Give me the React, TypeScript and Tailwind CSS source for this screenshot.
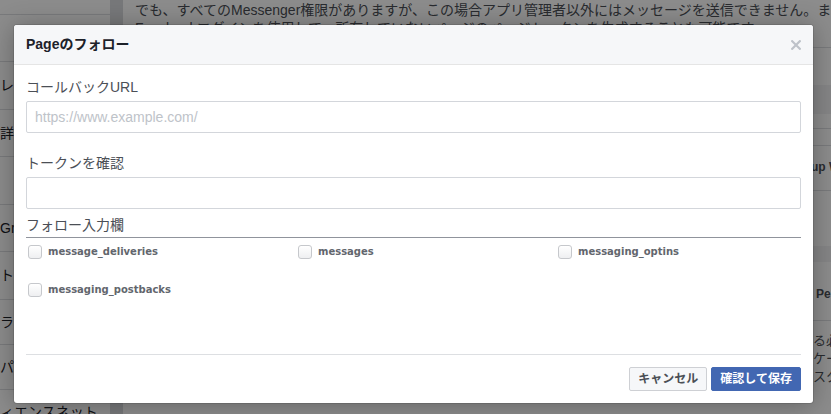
import React from "react";

const sans = "font-['Liberation_Sans','Noto_Sans_CJK_JP',sans-serif]";

function Checkbox({ label }: { label: string }) {
  return (
    <div className="flex h-[16px] items-center">
      <span className="block h-[14px] w-[14px] rounded-[3px] border border-[#c6c8cc] bg-gradient-to-b from-white to-[#eeeff1]" />
      <span className="ml-[6px] font-['DejaVu_Sans',sans-serif] text-[10px] font-bold leading-[16px] text-[#62666d]">
        {label}
      </span>
    </div>
  );
}

export default function App() {
  const sideItems: { h: string; text: string }[] = [
    { h: "h-[15px]", text: "" },
    { h: "h-[47px]", text: "" },
    { h: "h-[48px]", text: "レス" },
    { h: "h-[47px]", text: "詳細" },
    { h: "h-[48px]", text: "" },
    { h: "h-[47px]", text: "Graph" },
    { h: "h-[48px]", text: "トー" },
    { h: "h-[45px]", text: "ラベ" },
    { h: "h-[45px]", text: "パー" },
  ];

  return (
    <div className={`relative h-[414px] w-[831px] overflow-hidden bg-white ${sans}`}>
      {/* background page */}
      <div className="flex h-full">
        <aside className="flex w-[110px] flex-col overflow-hidden bg-white">
          {sideItems.map((it, i) => (
            <div
              key={i}
              className={`${it.h} flex shrink-0 items-center whitespace-nowrap border-b border-[#dddfe2] text-[14px] text-[#1d2129]`}
            >
              {it.text}
            </div>
          ))}
          <div className="whitespace-nowrap pt-[13px] text-[14px] leading-[18px] text-[#1d2129]">
            ィエンスネット
          </div>
        </aside>
        <div className="w-[13px] bg-[#d9dbdf]" />
        <main className="flex min-w-0 flex-1 flex-col bg-white pl-[12px]">
          <p className="mt-[1px] whitespace-nowrap text-[14px] leading-[18px] text-[#4b4f56]">
            でも、すべてのMessenger権限がありますが、この場合アプリ管理者以外にはメッセージを送信できません。ま
            <br />
            Facebookログインを使用して、所有していないページのページトークンを生成することも可能です。
          </p>
          <div className="flex flex-1">
            <div className="flex-1" />
            <div className="flex w-[18px] flex-col overflow-hidden whitespace-nowrap">
              <div className="h-[11px] shrink-0 border-b border-[#dddfe2]" />
              <div className="h-[37px] shrink-0" />
              <div className="h-[29px] shrink-0 bg-[#f2f3f5]" />
              <div className="h-[15px] shrink-0 border-b border-[#dddfe2]" />
              <div className="h-[17px] shrink-0 border-b border-[#dddfe2]" />
              <div className="mt-[8px] flex h-[25px] shrink-0 items-center pl-[2px] text-[12px] font-bold text-[#4b4f56]">
                <span className="-ml-[4px]">up W</span>
              </div>
              <div className="h-[12px] shrink-0 border-b border-[#dddfe2]" />
              <div className="mt-[55px] h-[16px] shrink-0 bg-[#f2f3f5]" />
              <div className="mt-[22px] flex h-[20px] shrink-0 items-center pl-[3px] text-[12px] font-bold text-[#4b4f56]">
                Pe
              </div>
              <div className="h-[17px] shrink-0 border-b border-[#dddfe2]" />
              <div className="mt-[11px] text-[13px] leading-[18px] text-[#4b4f56]">
                る必
                <br />
                ケー
                <br />
                スタ
              </div>
            </div>
          </div>
        </main>
      </div>

      {/* dim overlay */}
      <div className="absolute inset-0 bg-black/[0.45]" />

      {/* modal */}
      <div className="absolute left-[14px] top-[25px] flex h-[378px] w-[799px] flex-col rounded-[3px] bg-white shadow-[0_2px_26px_rgba(0,0,0,0.3),0_0_0_1px_rgba(0,0,0,0.1)]">
        <div className="flex h-[40px] shrink-0 items-center justify-between rounded-t-[3px] border-b border-[#e5e5e5] bg-[#f6f7f9] px-[12px]">
          <h2 className="-mt-[1px] text-[14px] font-bold leading-[18px] text-[#1d2129]">Pageのフォロー</h2>
          <svg width="10" height="10" viewBox="0 0 10 10">
            <path d="M1.2 1.2 L8.8 8.8 M8.8 1.2 L1.2 8.8" stroke="#bec2c9" strokeWidth="2.2" strokeLinecap="square" />
          </svg>
        </div>

        <div className="flex-1 px-[12px] pt-[12px]">
          <label className="mb-[4px] block text-[14px] leading-[20px] text-[#4b4f56]">コールバックURL</label>
          <div className="flex h-[32px] items-center rounded-[2px] border border-[#d3d6db] px-[8px] text-[14px] text-[#bec3c9]">
            https://www.example.com/
          </div>

          <label className="mb-[4px] mt-[20px] block text-[14px] leading-[20px] text-[#4b4f56]">トークンを確認</label>
          <div className="h-[32px] rounded-[2px] border border-[#d3d6db]" />

          <div className="mt-[6px] border-b border-[#90949c] pb-[2px] text-[14px] leading-[20px] text-[#4b4f56]">
            フォロー入力欄
          </div>
          <div className="mt-[6px] grid grid-cols-[270px_260px_1fr] gap-y-[22px] pl-[2px]">
            <Checkbox label="message_deliveries" />
            <Checkbox label="messages" />
            <Checkbox label="messaging_optins" />
            <Checkbox label="messaging_postbacks" />
          </div>
        </div>

        <div className="mx-[12px] flex shrink-0 justify-end gap-[4px] border-t border-[#dddfe2] py-[12px]">
          <button className="h-[24px] rounded-[2px] border border-[#ced0d4] bg-[#f6f7f9] px-[8px] text-[12px] font-bold leading-[22px] text-[#4b4f56]">
            キャンセル
          </button>
          <button className="h-[24px] rounded-[2px] border border-[#4267b2] bg-[#4267b2] px-[8px] text-[12px] font-bold leading-[22px] text-white">
            確認して保存
          </button>
        </div>
      </div>
    </div>
  );
}
